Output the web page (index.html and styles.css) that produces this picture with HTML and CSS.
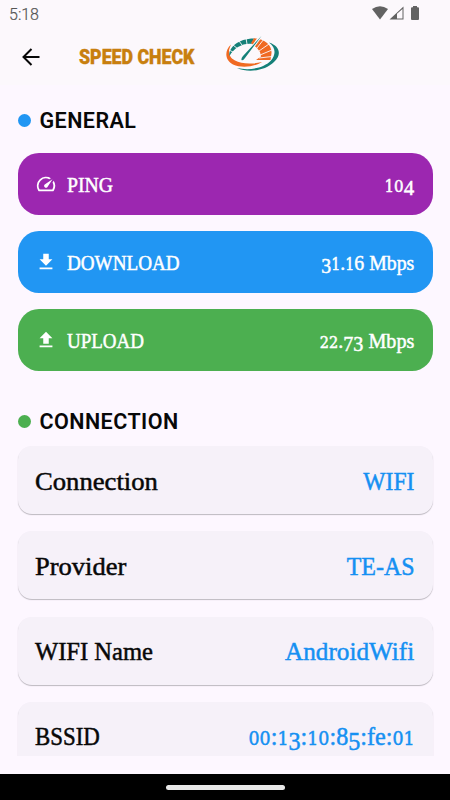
FILE: index.html
```
<!DOCTYPE html>
<html lang="en">
<head>
<meta charset="utf-8">
<title>Speed Check</title>
<link rel="stylesheet" href="styles.css">
</head>
<body>
<div class="status">
  <span class="clock">5:18</span>
  <svg class="status-icons" width="52" height="16" viewBox="0 0 52 16">
    <path fill="#626262" d="M0 3Q8-2.500 16 3L8 13.500Z"/>
    <path fill="#626262" d="M17.500 13.500L31.500 .5V13.500ZM25 7.800V12.500H30.500V3Z" fill-rule="evenodd"/>
    <path fill="#626262" d="M41 0h4v1.200h1q1 0 1 1v10.800q0 1-1 1h-6q-1 0-1-1v-10.800q0-1 1-1h1z"/>
  </svg>
</div>
<header class="bar">
  <svg class="back" width="18" height="18" viewBox="0 0 18 18" fill="none" stroke="#080808" stroke-width="2"><path d="M17.500 9H1.800M9.500 1L1.500 9L9.500 17"/></svg>
  <h1 class="title"><span>SPEED CHECK</span></h1>
  <svg class="logo" width="54" height="36" viewBox="0 0 54 36">
    <path fill="#158078" d="M43 6.500C54 10 56 19 48 26C39 35 22 37 11 32C24 35 38 32 45 24.500C50 18 50 12 43 6.500Z"/>
    <path fill="#f06a22" d="M5 8.500C-2 15 -1 24 7 28.500C16 32.500 29 30.500 36 26C26 28.500 15 28 9 24.500C2 21 2 15 5 8.500Z"/>
    <path fill="#158078" d="M3.500 20C2 12 12 2.500 28 2.500L25.500 8C17 7 8 12 3.500 20Z"/>
    <path fill="#f06a22" d="M28 2.300C40 3 46 10 45.500 17L44.500 24H30L35 20.500L34 16L31 12L25 7Z"/>
    <path stroke="#fcf8fc" stroke-width=".9" fill="none" d="M3 14L9 17M7 9L12 13M13 5L16 9M20 2L21 8M38 3L31 12M43 8L33 15M46 14L34 19M46 20.500L33 22"/>
    <path stroke="#fcf8fc" stroke-width="3" d="M34 1L20 20"/>
    <path fill="#158078" d="M35.500 0L19 22Q17 25 15.500 24Q15 22.500 17 20Z"/>
  </svg>
</header>
<main class="content">
  <h2 class="section"><i class="dot blue-dot"></i><span>GENERAL</span></h2>
  <div class="stats">
    <div class="stat purple">
      <svg class="icon" width="22" height="22" viewBox="0 0 24 24" fill="#fff"><path d="M20.380 8.570l-1.230 1.850a8 8 0 0 1-.220 7.580H5.070A8 8 0 0 1 15.580 6.850l1.850-1.230A10 10 0 0 0 3.350 19a2 2 0 0 0 1.720 1h13.850a2 2 0 0 0 1.740-1 10 10 0 0 0-.270-10.440zm-9.790 6.840a2 2 0 0 0 2.830 0l5.660-8.490-8.490 5.660a2 2 0 0 0 0 2.830z"/></svg>
      <span class="label fit-ping">PING</span><span class="value fit-104"><span class="x">10</span><span class="d">4</span></span>
    </div>
    <div class="stat blue">
      <svg class="icon" width="22" height="22" viewBox="0 0 24 24" fill="#fff"><path d="M19 9h-4V3H9v6H5l7 7 7-7zM5 18v2h14v-2H5z"/></svg>
      <span class="label fit-download">DOWNLOAD</span><span class="value fit-down"><span class="d">3</span><span class="x">1</span>.<span class="x">1</span>6 Mbps</span>
    </div>
    <div class="stat green">
      <svg class="icon" width="22" height="22" viewBox="0 0 24 24" fill="#fff"><path d="M9 16h6v-6h4l-7-7-7 7h4zm-4 2h14v2H5z"/></svg>
      <span class="label fit-upload">UPLOAD</span><span class="value fit-up"><span class="x">22</span>.<span class="d">73</span> Mbps</span>
    </div>
  </div>
  <h2 class="section second"><i class="dot green-dot"></i><span>CONNECTION</span></h2>
  <div class="cards">
    <div class="card"><span class="label fit-connection">Connection</span><span class="value fit-wifi">WIFI</span></div>
    <div class="card"><span class="label fit-provider">Provider</span><span class="value fit-te">TE-AS</span></div>
    <div class="card"><span class="label fit-name">WIFI Name</span><span class="value fit-android">AndroidWifi</span></div>
    <div class="card"><span class="label fit-bssid">BSSID</span><span class="value fit-mac"><span class="x">00</span>:<span class="x">1</span><span class="d">3</span>:<span class="x">10</span>:8<span class="d">5</span>:fe:<span class="x">01</span></span></div>
  </div>
</main>
<footer class="nav"><i class="handle"></i></footer>
</body>
</html>
```
FILE: styles.css
```
* { box-sizing: border-box; }
body {
  margin: 0; width: 450px; height: 800px; overflow: hidden;
  display: flex; flex-direction: column;
  background: #fdf7ff; color: #080808;
  font-family: Roboto, sans-serif;
}
.status {
  height: 28px; flex: none; background: #fcf8fc;
  display: flex; justify-content: space-between;
  padding: 6px 26px 0 9px;
}
.clock { font-size: 16px; line-height: 17px; color: #555; font-weight: 300; -webkit-text-stroke: .2px #555; }
.status-icons { display: block; }
.bar {
  height: 57px; flex: none; background: #fcf8fc;
  display: flex; align-items: center; padding-left: 22px;
}
.back { flex: none; }
.title {
  margin: 0 0 0 39px; width: 147px; flex: none;
  font-size: 20px; line-height: 24px; font-weight: 900; color: #c87f0e;
}
.title span { display: inline-block; transform: scaleX(.887); transform-origin: left; white-space: nowrap; -webkit-text-stroke: .4px #c87f0e; }
.logo { flex: none; margin-top: -5px; }
.content { height: 671px; flex: none; overflow: hidden; padding: 22.500px 17.500px 0; }
.section {
  margin: 0; height: 26px; display: flex; align-items: center; gap: 9px;
  font-size: 21.500px; line-height: 26px; font-weight: 600; letter-spacing: .45px;
}
.dot { width: 13px; height: 13px; border-radius: 50%; flex: none; }
.blue-dot { background: #2196f3; }
.green-dot { background: #4caf50; }
.stats { display: grid; gap: 16px; margin-top: 19px; }
.stat {
  height: 62px; border-radius: 21px; color: #fff;
  display: flex; align-items: center; padding: 2px 18px 0 17.500px;
  font: 22px/30px "Liberation Serif", serif;
  -webkit-text-stroke: .5px #fff;
}
.icon { flex: none; margin: 0 10px 2px 0; stroke: none; }
.purple { background: #9c27b0; }
.blue { background: #2196f3; }
.green { background: #4caf50; }
.label { transform-origin: left; white-space: nowrap; }
.value { transform-origin: right; margin-left: auto; white-space: nowrap; }
.x { font-family: "DejaVu Serif", serif; font-size: .72em; line-height: 1; }
.d { position: relative; top: .17em; }
.second { margin-top: 38px; }
.cards { display: grid; gap: 17.300px; margin-top: 11.500px; }
.card {
  height: 68px; border-radius: 14px; background: #f6f1f9;
  box-shadow: 0 1px 1px #bdb8c0;
  display: flex; align-items: center; padding: 3px 18px 0 17.500px;
  font: 26px/34px "Liberation Serif", serif;
  -webkit-text-stroke: .5px;
}
.card .value { color: #1590f2; }
.fit-ping { transform: scaleX(.896); }
.fit-download { transform: scaleX(.869); }
.fit-upload { transform: scaleX(.863); }
.fit-104 { transform: scaleX(.95); }
.fit-down { transform: scaleX(.9); }
.fit-up { transform: scaleX(.915); }
.fit-connection { transform: scaleX(1.025); }
.fit-provider { transform: scaleX(1.020); }
.fit-name { transform: scaleX(.945); }
.fit-bssid { transform: scaleX(.88); }
.fit-wifi { transform: scaleX(.905); }
.fit-te { transform: scaleX(.923); }
.fit-android { transform: scaleX(.97); }
.fit-mac { transform: scaleX(.93); }
.nav {
  margin-top: auto; height: 26px; flex: none; background: #000;
  display: flex; justify-content: center; align-items: center;
}
.handle { width: 119px; height: 5px; border-radius: 3px; background: #e8e8e8; }
```
